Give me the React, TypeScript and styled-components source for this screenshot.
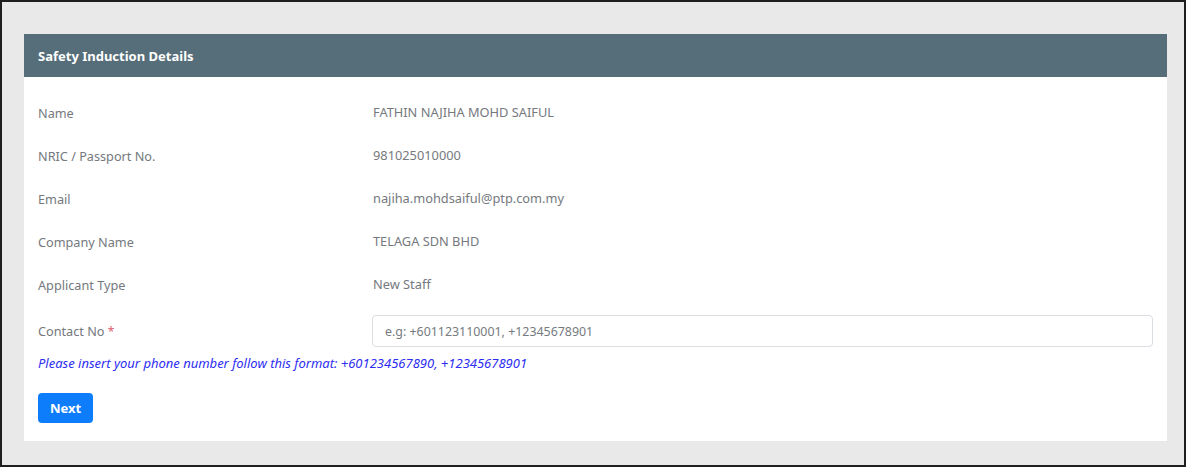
import React from "react";
import styled, { createGlobalStyle } from "styled-components";

const GlobalStyle = createGlobalStyle`
  html, body {
    margin: 0;
    padding: 0;
    background: #ffffff;
  }
  body {
    font-family: "Noto Sans", "Open Sans", sans-serif;
  }
`;

const rows = [
  { label: "Name", value: "FATHIN NAJIHA MOHD SAIFUL" },
  { label: "NRIC / Passport No.", value: "981025010000" },
  { label: "Email", value: "najiha.mohdsaiful@ptp.com.my" },
  { label: "Company Name", value: "TELAGA SDN BHD" },
  { label: "Applicant Type", value: "New Staff" },
];

const App = () => {
  return (
    <>
      <GlobalStyle />
      <Frame>
        <Card>
          <CardHeader>Safety Induction Details</CardHeader>
          <CardBody>
            {rows.map((r) => (
              <InfoRow key={r.label}>
                <Label>{r.label}</Label>
                <Value>{r.value}</Value>
              </InfoRow>
            ))}
            <ContactRow>
              <Label>
                Contact No <Required>*</Required>
              </Label>
              <Input placeholder="e.g: +601123110001, +12345678901" />
            </ContactRow>
            <Hint>
              Please insert your phone number follow this format: +601234567890,
              +12345678901
            </Hint>
            <NextButton>Next</NextButton>
          </CardBody>
        </Card>
      </Frame>
    </>
  );
};

export default App;

const Frame = styled.div`
  box-sizing: border-box;
  width: 1186px;
  height: 467px;
  border: 2px solid #1e1e1e;
  background: #e9e9e9;
  padding: 32px 17px 24px 22px;
`;

const Card = styled.div`
  background: #ffffff;
  height: 100%;
  display: flex;
  flex-direction: column;
`;

const CardHeader = styled.div`
  height: 43px;
  display: flex;
  align-items: center;
  padding: 0 14px;
  background: #566e79;
  color: #ffffff;
  font-size: 13px;
  font-weight: 700;
`;

const CardBody = styled.div`
  padding: 14px 14px 18px 14px;
  display: flex;
  flex-direction: column;
`;

const InfoRow = styled.div`
  display: grid;
  grid-template-columns: 335px 1fr;
  align-items: center;
  height: 43px;
`;

const Label = styled.div`
  font-size: 12.7px;
  color: #75797e;
`;

const Value = styled.div`
  font-size: 12.8px;
  color: #75797e;
  margin-top: -2px;
`;

const ContactRow = styled.div`
  display: grid;
  grid-template-columns: 334px 1fr;
  align-items: center;
  margin-top: 9px;
`;

const Required = styled.span`
  color: #e0606c;
  font-size: 12px;
`;

const Input = styled.input`
  box-sizing: border-box;
  height: 32px;
  width: 100%;
  border: 1px solid #d9dee3;
  border-radius: 4px;
  padding: 0 12px;
  font-family: "Noto Sans", "Open Sans", sans-serif;
  font-size: 12.4px;
  color: #495057;
  outline: none;

  &::placeholder {
    color: #767b80;
  }
`;

const Hint = styled.div`
  margin-top: 7px;
  font-size: 13px;
  line-height: 18px;
  font-style: italic;
  color: #2e2ef2;
`;

const NextButton = styled.button`
  align-self: flex-start;
  margin-top: 21px;
  height: 30px;
  padding: 0 12px;
  border: none;
  border-radius: 4px;
  background: #0d7dfb;
  color: #ffffff;
  font-family: "Noto Sans", "Open Sans", sans-serif;
  font-size: 13px;
  font-weight: 700;
  cursor: pointer;
`;
